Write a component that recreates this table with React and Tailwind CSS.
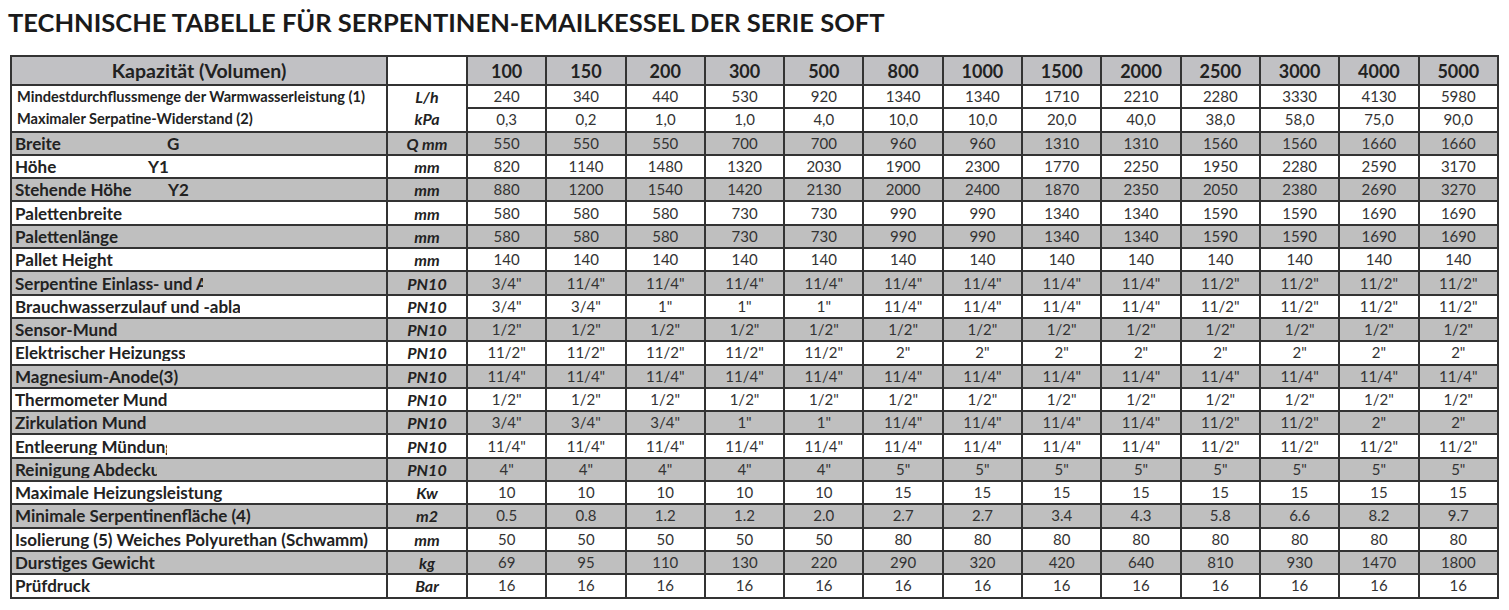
import React from "react";

const sizes = ["100", "150", "200", "300", "500", "800", "1000", "1500", "2000", "2500", "3000", "4000", "5000"];

const rep = (v, n) => Array(n).fill(v);

const rows = [
  { label: "Breite", tag: "G", tagW: "w-[152px]", unit: "Q mm", gray: true, values: ["550", "550", "550", "700", "700", "960", "960", "1310", "1310", "1560", "1560", "1660", "1660"] },
  { label: "Höhe", tag: "Y1", tagW: "w-[133px]", unit: "mm", values: ["820", "1140", "1480", "1320", "2030", "1900", "2300", "1770", "2250", "1950", "2280", "2590", "3170"] },
  { label: "Stehende Höhe", tag: "Y2", tagW: "w-[153px]", unit: "mm", gray: true, values: ["880", "1200", "1540", "1420", "2130", "2000", "2400", "1870", "2350", "2050", "2380", "2690", "3270"] },
  { label: "Palettenbreite", unit: "mm", values: ["580", "580", "580", "730", "730", "990", "990", "1340", "1340", "1590", "1590", "1690", "1690"] },
  { label: "Palettenlänge", unit: "mm", gray: true, values: ["580", "580", "580", "730", "730", "990", "990", "1340", "1340", "1590", "1590", "1690", "1690"] },
  { label: "Pallet Height", unit: "mm", values: rep("140", 13) },
  { label: "Serpentine Einlass- und Auslass", clip: "max-w-[188px]", unit: "PN10", gray: true, values: ['3/4"', ...rep('11/4"', 8), ...rep('11/2"', 4)] },
  { label: "Brauchwasserzulauf und -ablauf", clip: "max-w-[225px]", unit: "PN10", values: ['3/4"', '3/4"', '1"', '1"', '1"', ...rep('11/4"', 4), ...rep('11/2"', 4)] },
  { label: "Sensor-Mund", unit: "PN10", gray: true, values: rep('1/2"', 13) },
  { label: "Elektrischer Heizungsstab", clip: "max-w-[170px]", unit: "PN10", values: [...rep('11/2"', 5), ...rep('2"', 8)] },
  { label: "Magnesium-Anode(3)", unit: "PN10", gray: true, values: rep('11/4"', 13) },
  { label: "Thermometer Mund", unit: "PN10", values: rep('1/2"', 13) },
  { label: "Zirkulation Mund", unit: "PN10", gray: true, values: ['3/4"', '3/4"', '3/4"', '1"', '1"', ...rep('11/4"', 4), '11/2"', '11/2"', '2"', '2"'] },
  { label: "Entleerung Mündung", clip: "max-w-[152px]", unit: "PN10", values: [...rep('11/4"', 9), ...rep('11/2"', 4)] },
  { label: "Reinigung Abdeckung", clip: "max-w-[142px]", unit: "PN10", gray: true, values: [...rep('4"', 5), ...rep('5"', 8)] },
  { label: "Maximale Heizungsleistung", unit: "Kw", values: [...rep("10", 5), ...rep("15", 8)] },
  { label: "Minimale Serpentinenfläche (4)", unit: "m2", gray: true, values: ["0.5", "0.8", "1.2", "1.2", "2.0", "2.7", "2.7", "3.4", "4.3", "5.8", "6.6", "8.2", "9.7"] },
  { label: "Isolierung (5) Weiches Polyurethan (Schwamm)", unit: "mm", values: [...rep("50", 5), ...rep("80", 8)] },
  { label: "Durstiges Gewicht", unit: "kg", gray: true, values: ["69", "95", "110", "130", "220", "290", "320", "420", "640", "810", "930", "1470", "1800"] },
  { label: "Prüfdruck", unit: "Bar", values: rep("16", 13) },
];

const flow = ["240", "340", "440", "530", "920", "1340", "1340", "1710", "2210", "2280", "3330", "4130", "5980"];
const resist = ["0,3", "0,2", "1,0", "1,0", "4,0", "10,0", "10,0", "20,0", "40,0", "38,0", "58,0", "75,0", "90,0"];

const cell = "border-2 border-[#333333] p-0";
const num = `${cell} text-center text-[15px] text-[#333333]`;

const App = () => {
  return (
    <div className="w-[1509px] h-[610px] bg-white font-['Lato','Liberation_Sans',sans-serif] text-[#222222]">
      <h1 className="pl-[8px] pt-[3px] h-[55px] text-[25.5px] font-bold text-[#1a1a1a]">
        TECHNISCHE TABELLE FÜR SERPENTINEN-EMAILKESSEL DER SERIE SOFT
      </h1>
      <table className="ml-[10px] w-[1489px] table-fixed border-collapse border-2 border-[#333333]">
        <colgroup>
          <col className="w-[376px]" />
          <col className="w-[80px]" />
          {sizes.map((s) => (
            <col key={s} />
          ))}
        </colgroup>
        <thead>
          <tr className="h-[29px] bg-[#c1c1c4]">
            <th className={`${cell} text-[19.5px] leading-none font-bold`}>Kapazität (Volumen)</th>
            <th className={`${cell} bg-white`}></th>
            {sizes.map((s) => (
              <th key={s} className={`${cell} text-[18px] leading-none font-bold`}>
                {s}
              </th>
            ))}
          </tr>
        </thead>
        <tbody className="text-[17px] leading-[17px]">
          <tr className="h-[23.3px]">
            <td rowSpan={2} className={`${cell} pl-[5px] text-[14.6px] font-bold leading-[22px]`}>
              <div>Mindestdurchflussmenge der Warmwasserleistung (1)</div>
              <div>Maximaler Serpatine-Widerstand (2)</div>
            </td>
            <td rowSpan={2} className={`${cell} text-center text-[16px] font-bold italic leading-[22px]`}>
              <div>L/h</div>
              <div>kPa</div>
            </td>
            {flow.map((v, i) => (
              <td key={i} className={num}>
                {v}
              </td>
            ))}
          </tr>
          <tr className="h-[23.3px]">
            {resist.map((v, i) => (
              <td key={i} className={num}>
                {v}
              </td>
            ))}
          </tr>
          {rows.map((r) => (
            <tr key={r.label} className={`h-[23.3px] ${r.gray ? "bg-[#bfbfbf]" : "bg-white"}`}>
              <td className={`${cell} pl-[3px] font-bold whitespace-nowrap`}>
                {r.tag ? (
                  <>
                    <span className={`inline-block align-top ${r.tagW}`}>{r.label}</span>
                    <span>{r.tag}</span>
                  </>
                ) : r.clip ? (
                  <span className={`inline-block overflow-hidden align-top ${r.clip}`}>{r.label}</span>
                ) : (
                  r.label
                )}
              </td>
              <td className={`${cell} text-center text-[16px] font-bold italic`}>{r.unit}</td>
              {r.values.map((v, i) => (
                <td key={i} className={num}>
                  {v}
                </td>
              ))}
            </tr>
          ))}
        </tbody>
      </table>
    </div>
  );
};

export default App;
